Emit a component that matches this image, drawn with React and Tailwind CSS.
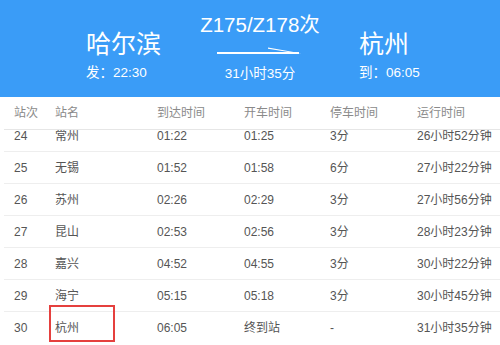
import React from 'react';

const rows = [
  { no: '24', name: '常州', arrive: '01:22', depart: '01:25', stop: '3分', total: '26小时52分钟' },
  { no: '25', name: '无锡', arrive: '01:52', depart: '01:58', stop: '6分', total: '27小时22分钟' },
  { no: '26', name: '苏州', arrive: '02:26', depart: '02:29', stop: '3分', total: '27小时56分钟' },
  { no: '27', name: '昆山', arrive: '02:53', depart: '02:56', stop: '3分', total: '28小时23分钟' },
  { no: '28', name: '嘉兴', arrive: '04:52', depart: '04:55', stop: '3分', total: '30小时22分钟' },
  { no: '29', name: '海宁', arrive: '05:15', depart: '05:18', stop: '3分', total: '30小时45分钟' },
  { no: '30', name: '杭州', arrive: '06:05', depart: '终到站', stop: '-', total: '31小时35分钟', mark: true },
];

const cols = 'grid grid-cols-[41px_102px_87px_86px_87px_1fr] pl-[10px]';

function Arrow() {
  return (
    <svg width="88" height="9" viewBox="0 0 88 9" className="block mx-auto">
      <rect x="1" y="6" width="82" height="2" fill="#fff" />
      <polygon points="52,1.5 86,7.4 74,6.2 52,2.8" fill="#fff" />
    </svg>
  );
}

export default function App() {
  return (
    <div className="w-[500px] h-[345px] overflow-hidden bg-white font-['Liberation_Sans','Noto_Sans_CJK_SC',sans-serif]">
      {/* route banner */}
      <header className="h-[97px] bg-[#3a9cf7] text-white flex pl-[86px]">
        <div className="w-[114px] pt-[32px]">
          <div className="text-[25px] leading-[25px]">哈尔滨</div>
          <div className="mt-[9px] text-[13.5px] leading-[14px]">发：22:30</div>
        </div>
        <div className="w-[120px] pt-[14px] flex flex-col items-center">
          <div className="text-[20.5px] leading-[21px] whitespace-nowrap">Z175/Z178次</div>
          <div className="mt-[11px]"><Arrow /></div>
          <div className="mt-[12px] text-[13.5px] leading-[14px]">31小时35分</div>
        </div>
        <div className="ml-[39px] pt-[32px]">
          <div className="text-[25px] leading-[25px]">杭州</div>
          <div className="mt-[9px] text-[13.5px] leading-[14px]">到：06:05</div>
        </div>
      </header>

      {/* stop table */}
      <div className="ml-[4px]">
        <div className={`${cols} h-[33px] leading-[33px] text-[12px] text-[#8a8a8a] border-b border-[#e6e6e6]`}>
          <span>站次</span>
          <span>站名</span>
          <span>到达时间</span>
          <span>开车时间</span>
          <span>停车时间</span>
          <span>运行时间</span>
        </div>
        <div className="h-[215px] overflow-hidden">
          <div className="-mt-[10px]">
            {rows.map((r, i) => (
              <div
                key={r.no}
                className={`${cols} h-[32px] pt-[1px] leading-[31px] text-[12px] text-[#555] ${i < rows.length - 1 ? 'border-b border-[#eeeeee]' : ''}`}
              >
                <span>{r.no}</span>
                <span className="relative">
                  {r.name}
                  {r.mark && (
                    <span className="absolute left-[-6px] top-[-8px] w-[66px] h-[37px] border-2 border-[#e5403e]" />
                  )}
                </span>
                <span>{r.arrive}</span>
                <span>{r.depart}</span>
                <span>{r.stop}</span>
                <span>{r.total}</span>
              </div>
            ))}
          </div>
        </div>
      </div>
    </div>
  );
}
